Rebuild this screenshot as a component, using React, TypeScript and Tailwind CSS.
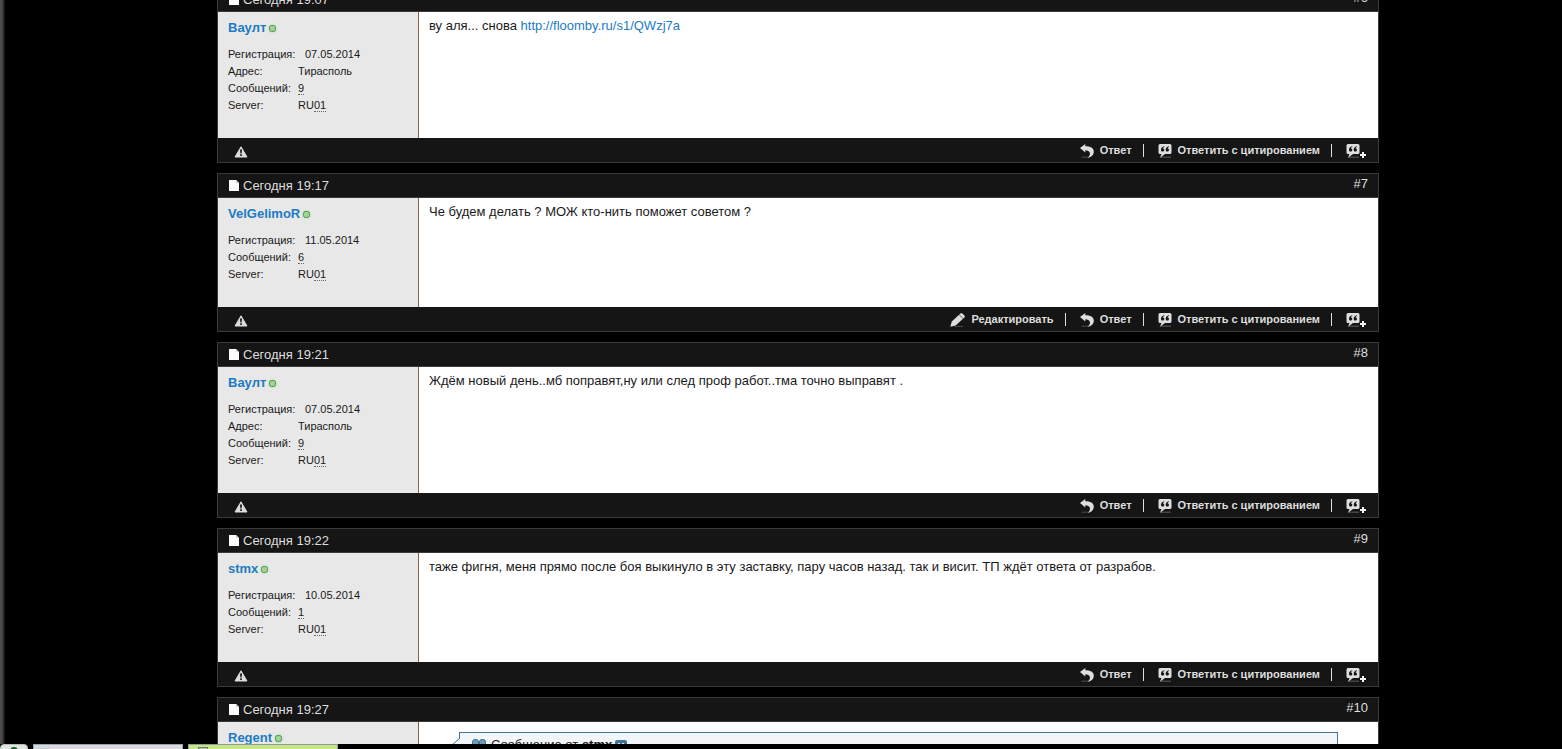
import type { ReactNode } from "react";

type Post = {
  id: number;
  time: string;
  user: string;
  joined: string;
  address?: string;
  messages: number;
  own?: boolean;
  body: ReactNode;
};

const posts: Post[] = [
  {
    id: 6,
    time: "19:07",
    user: "Ваулт",
    joined: "07.05.2014",
    address: "Тирасполь",
    messages: 9,
    body: (
      <>
        ву аля... снова{" "}
        <a href="http://floomby.ru/s1/QWzj7a" className="text-[#1c7bc4]">
          http://floomby.ru/s1/QWzj7a
        </a>
      </>
    ),
  },
  {
    id: 7,
    time: "19:17",
    user: "VelGelimoR",
    joined: "11.05.2014",
    messages: 6,
    own: true,
    body: "Че будем делать ? МОЖ кто-нить поможет советом ?",
  },
  {
    id: 8,
    time: "19:21",
    user: "Ваулт",
    joined: "07.05.2014",
    address: "Тирасполь",
    messages: 9,
    body: "Ждём новый день..мб поправят,ну или след проф работ..тма точно выправят .",
  },
  {
    id: 9,
    time: "19:22",
    user: "stmx",
    joined: "10.05.2014",
    messages: 1,
    body: "таже фигня, меня прямо после боя выкинуло в эту заставку, пару часов назад. так и висит. ТП ждёт ответа от разрабов.",
  },
  {
    id: 10,
    time: "19:27",
    user: "Regent",
    joined: "10.05.2014",
    messages: 1,
    body: <Quote author="stmx" />,
  },
];

function PageIcon() {
  return (
    <svg width="10" height="11" viewBox="0 0 10 11" aria-hidden="true">
      <path d="M0 0h7L10 3V11H0z" fill="#fbfbfb" />
      <path d="M7 0v3H10z" fill="#cfcfcf" />
    </svg>
  );
}

function OnlineDot() {
  return (
    <svg width="11" height="11" viewBox="0 0 11 11" aria-hidden="true">
      <circle cx="5.5" cy="5.5" r="5" fill="#b5e6ab" opacity="0.4" />
      <rect x="2.5" y="2.5" width="6" height="6" rx="2" fill="#a3cf9d" stroke="#4f9a4a" />
    </svg>
  );
}

function ReportIcon() {
  return (
    <svg width="14" height="12" viewBox="0 0 14 12" aria-hidden="true">
      <path d="M7 0.8 13 11H1z" fill="#dcdcdc" stroke="#dcdcdc" strokeLinejoin="round" />
      <path d="M6 3.5h2L7.6 7.5H6.4zM6.2 8.3h1.6V10H6.2z" fill="#151515" />
    </svg>
  );
}

function PencilIcon() {
  return (
    <svg width="15" height="14" viewBox="0 0 15 14" aria-hidden="true">
      <path d="M5 13h8v1H4z" fill="#454545" />
      <path d="M0.3 13.8 1.8 8.6 10.4 0.6q1-.9 2 0l2 1.8q.8 1 0 2L5.6 12.500z" fill="#dedede" />
      <path d="m9.200 1.900 4 3.700" stroke="#151515" strokeWidth="0.6" />
    </svg>
  );
}

function ReplyIcon() {
  return (
    <svg width="14" height="14" viewBox="0 0 14 14" aria-hidden="true">
      <path d="M2 12.400h7V14H1z" fill="#3a3a3a" />
      <path
        d="M0 4 5.300 0v2.300c5 0 8.500 1.500 8.500 5.500 0 3.300-2.600 5.400-6 6 1.700-1.500 2.600-3.200 2-5C9.300 7.200 7.800 6.300 5.300 6.300V8.500z"
        fill="#dedede"
      />
    </svg>
  );
}

function QuoteIcon({ plus = false }: { plus?: boolean }) {
  return (
    <svg width={plus ? 20 : 14} height="14" viewBox={plus ? "0 0 20 14" : "0 0 14 14"} aria-hidden="true">
      <path d="M4 12.400h9V14H1z" fill="#454545" />
      <path d="M2 0h10q1.500 0 1.500 1.500v7q0 1.500-1.500 1.500H7l-5 3.700L3.500 10H2Q.5 10 .5 8.500v-7Q.5 0 2 0z" fill="#dedede" />
      <path
        d="M6.300 2.300C4.200 2.600 3 3.900 3 5.700c0 1.200.7 1.900 1.700 1.900s1.600-.6 1.600-1.500-.6-1.500-1.500-1.500c.2-.8.700-1.200 1.500-1.500zM11 2.300C8.900 2.600 7.700 3.900 7.700 5.700c0 1.200.7 1.900 1.700 1.900s1.600-.6 1.600-1.500-.6-1.500-1.500-1.500c.2-.8.700-1.200 1.500-1.500z"
        fill="#151515"
      />
      {plus && <path d="M16 8h2v2h2v2h-2v2h-2v-2h-2v-2h2z" fill="#f2f2f2" />}
    </svg>
  );
}

function Quote({ author }: { author: string }) {
  return (
    <blockquote className="relative mt-[5px] mr-[30px] ml-[30px] h-20 border border-[#417394] bg-[#f2f6f8] pt-[3px] pl-3">
      <svg className="absolute top-[5px] -left-2" width="8" height="14" viewBox="0 0 8 14" aria-hidden="true">
        <path d="M8 0 0 7l8 7z" fill="#f2f6f8" />
        <path d="M8 0 0 7l8 7" fill="none" stroke="#417394" />
      </svg>
      <div className="flex items-center">
        <svg className="mr-[5px]" width="14" height="12" viewBox="0 0 14 12" aria-hidden="true">
          <path
            d="M3 .5h1.500Q6.500.5 6.500 3v3q0 4-4 5.500V8Q.5 7 .5 5V3Q.5.5 3 .5zM10 .5h1.500q2 0 2 2.500v3q0 4-4 5.500V8q-2-1-2-3V3q0-2.500 2.500-2.500z"
            fill="#6f9ab5"
            stroke="#417394"
          />
        </svg>
        <span>
          Сообщение от <strong>{author}</strong>
        </span>
        <a href="#post9" aria-label="Просмотр сообщения" className="ml-[3px]">
          <svg width="12" height="10" viewBox="0 0 12 10" aria-hidden="true">
            <rect width="12" height="10" rx="2" fill="#417394" />
            <path d="M3 3h2v1h2V3h2v2L6 8 3 5z" fill="#dbe7ee" />
          </svg>
        </a>
      </div>
    </blockquote>
  );
}

function Action({ icon, label, name }: { icon: ReactNode; label?: string; name?: string }) {
  return (
    <a href="#reply" aria-label={name} className="flex items-center gap-1.5 text-[11px] font-bold text-[#dedede]">
      {icon}
      {label}
    </a>
  );
}

function Divider() {
  return <span className="mr-3.5 ml-[11px] h-[13px] w-px bg-[#dedede]" />;
}

function PostCard({ post }: { post: Post }) {
  return (
    <li id={`post${post.id}`} className="border border-[#3a3a3a] bg-[#151515]">
      <div className="flex h-6 justify-between border-b border-[#3a3a3a] pr-2.5 pl-[11px] text-[#dedede]">
        <span className="flex items-center gap-1">
          <PageIcon />
          Сегодня {post.time}
        </span>
        <a href={`#post${post.id}`} className="leading-5">
          #{post.id}
        </a>
      </div>

      <div className="flex bg-white">
        <div className="w-[201px] shrink-0 border-r border-[#8b6243] bg-[#e8e8e8] px-2.5 pt-1.5 pb-6">
          <div className="flex items-center gap-px">
            <a href="#profile" className="text-[13px] leading-5 font-bold text-[#1c7bc4]">
              {post.user}
            </a>
            <OnlineDot />
          </div>
          <dl className="mt-2 text-[11px] leading-[17px]">
            <div className="flex">
              <dt className="w-[77px]">Регистрация:</dt>
              <dd>{post.joined}</dd>
            </div>
            {post.address && (
              <div className="flex">
                <dt className="w-[70px]">Адрес:</dt>
                <dd>{post.address}</dd>
              </div>
            )}
            <div className="flex">
              <dt className="w-[70px]">Сообщений:</dt>
              <dd>
                <a href="#messages" className="border-b border-dotted border-[#666]">
                  {post.messages}
                </a>
              </dd>
            </div>
            <div className="flex">
              <dt className="w-[70px]">Server:</dt>
              <dd>
                RU<span className="border-b border-dotted border-[#666]">01</span>
              </dd>
            </div>
          </dl>
        </div>
        <div className="min-w-0 flex-1 px-2.5 pt-[5px] leading-[18px]">{post.body}</div>
      </div>

      <div className="flex h-6 items-center justify-between pr-3 pl-4">
        <a href="#report" aria-label="Пожаловаться" className="pt-1">
          <ReportIcon />
        </a>
        <div className="flex items-center pt-px">
          {post.own && (
            <>
              <Action icon={<PencilIcon />} label="Редактировать" />
              <Divider />
            </>
          )}
          <Action icon={<ReplyIcon />} label="Ответ" />
          <Divider />
          <Action icon={<QuoteIcon />} label="Ответить с цитированием" />
          <Divider />
          <Action icon={<QuoteIcon plus />} name="Мультицитирование" />
        </div>
      </div>
    </li>
  );
}

function Taskbar() {
  return (
    <div className="fixed inset-x-0 bottom-0 flex h-[5px] gap-[5px] overflow-hidden bg-black">
      <button
        aria-label="Пуск"
        className="flex h-6 w-7 items-start justify-center rounded-t-sm border border-[#b5bcb8] bg-[#dfe6e0] pt-0.5"
      >
        <span className="size-2 rounded-full bg-[#175c22]" />
      </button>
      <button
        aria-label="Окно 1"
        className="flex h-6 w-[150px] items-start border border-[#95a5b5] bg-[#d9dadc] pt-[3px] pl-1"
      >
        <span className="size-3 bg-[#cbccce]" />
      </button>
      <button
        aria-label="Окно 2"
        className="flex h-6 w-[150px] items-start border border-[#8b9d9a] bg-[#c6e585] pt-0.5 pl-[9px]"
      >
        <span className="size-2.5 border border-[#74796f] bg-[#b9bfae]" />
      </button>
    </div>
  );
}

export default function App() {
  return (
    <div className="h-screen overflow-hidden bg-black bg-linear-to-r from-[#505050] via-[#3c3c3c] via-[3px] to-black to-[6px] font-['Liberation_Sans',Arial,sans-serif] text-[13px] text-[#1a1a1a]">
      <ol className="-mt-[13px] mr-[183px] ml-[217px] flex flex-col gap-2.5">
        {posts.map((post) => (
          <PostCard key={post.id} post={post} />
        ))}
      </ol>
      <Taskbar />
    </div>
  );
}
